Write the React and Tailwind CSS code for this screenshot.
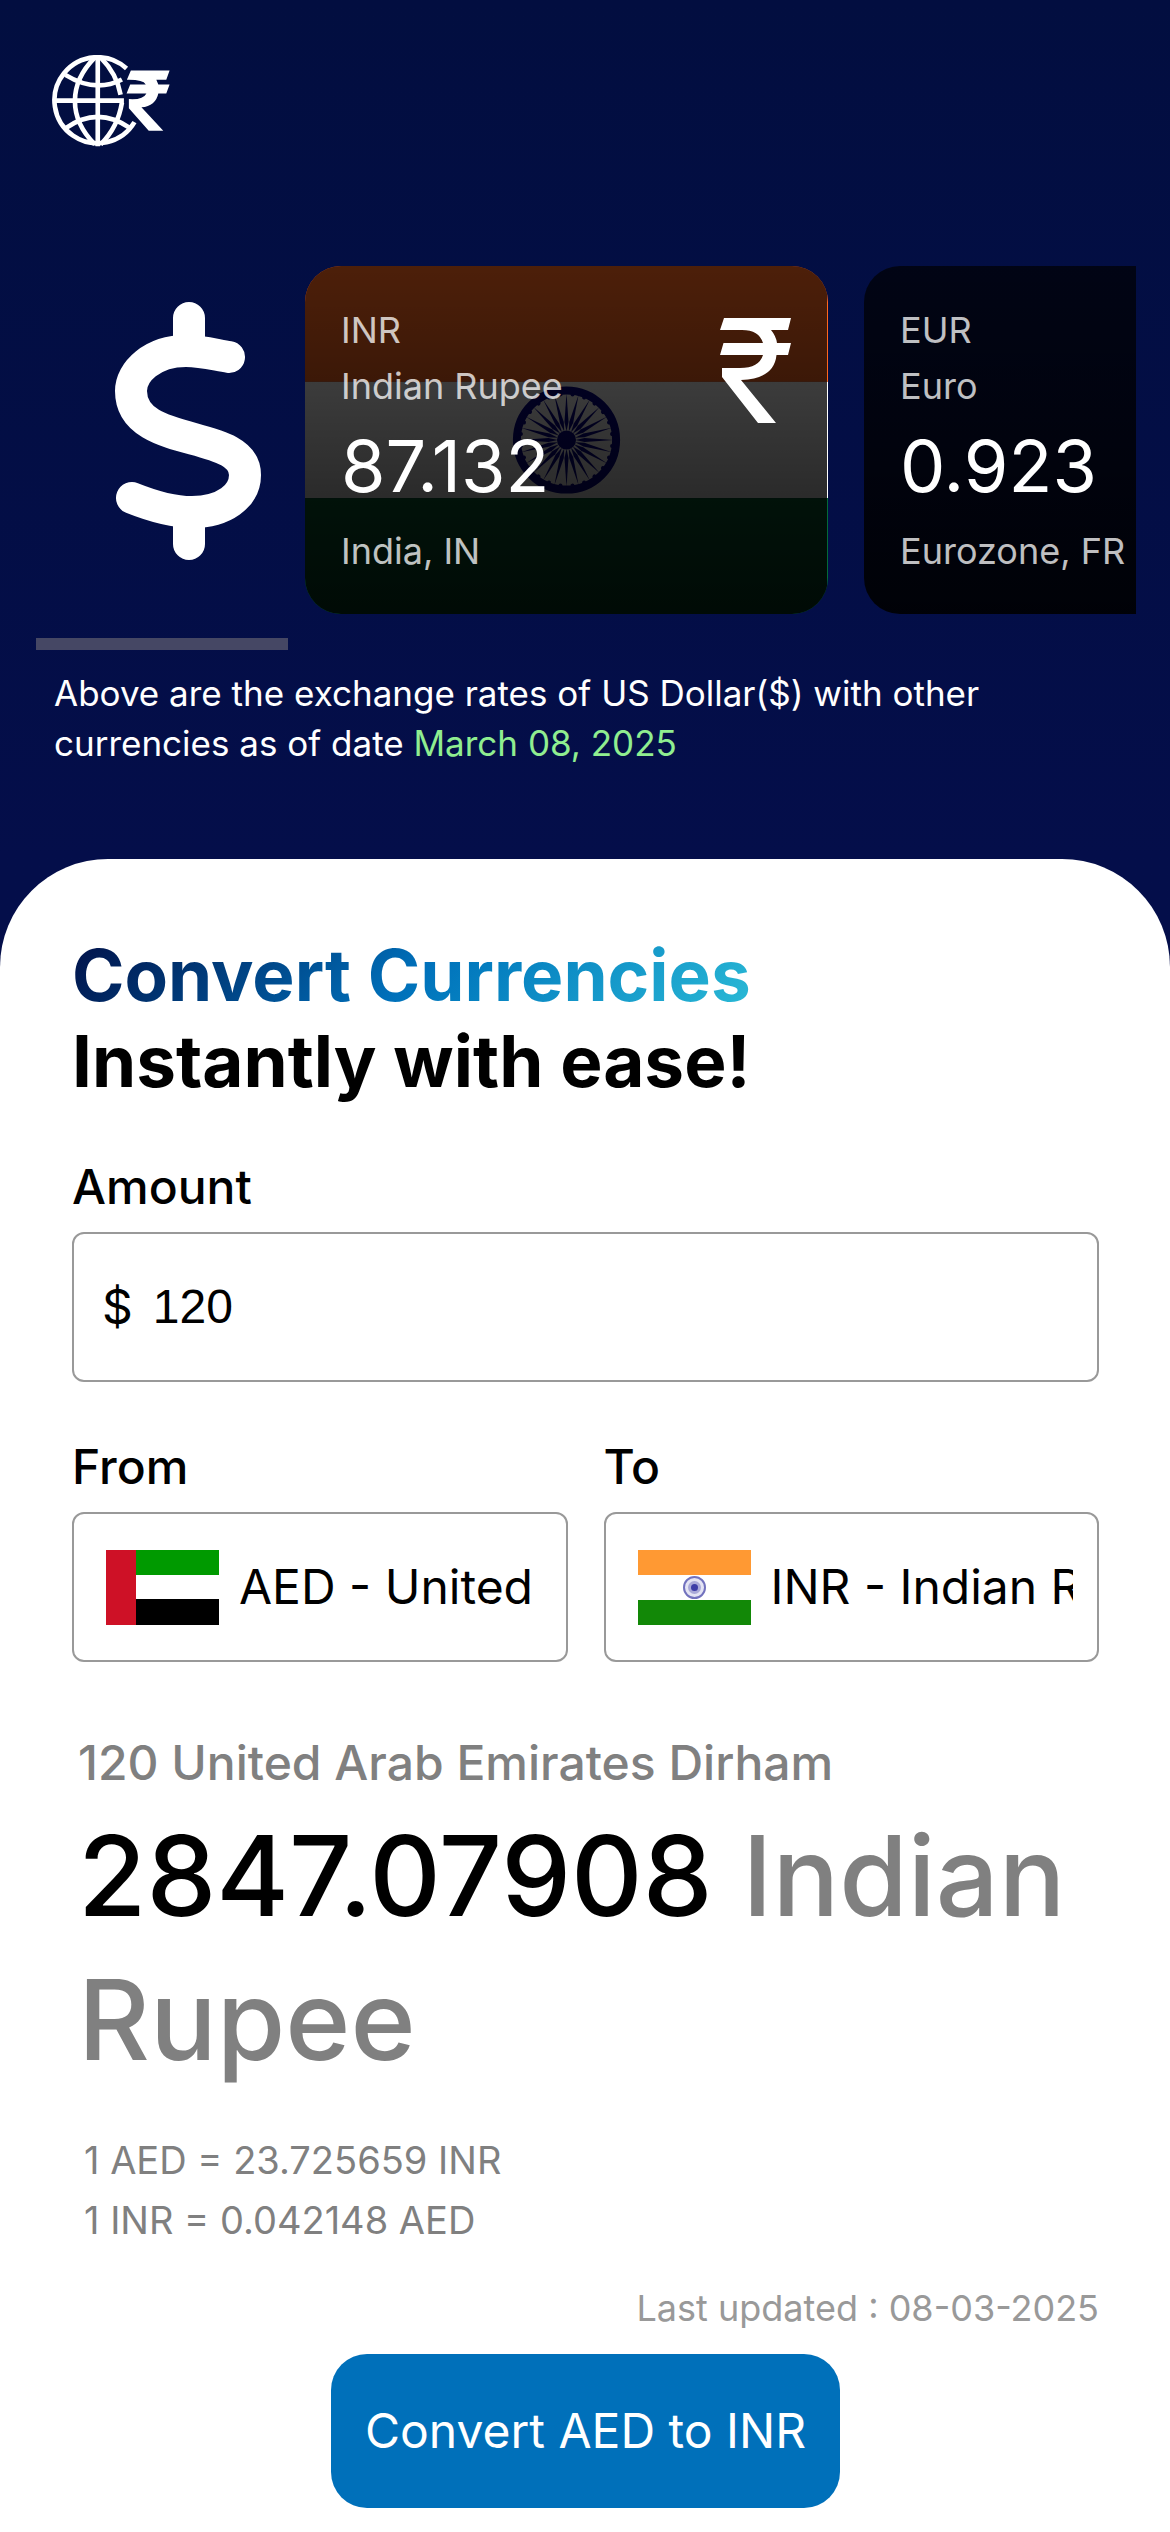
import React, { useState } from "react";

function Logo() {
  return (
    <svg viewBox="156 104 354 278" className="h-[92px] w-[118px]" role="img" aria-label="Currency converter">
      <g fill="none" stroke="#fff" strokeWidth="14">
        <path d="M380 145A130 130 0 1 0 404 307" />
        <path d="M293 106V380M160 242H372" />
        <path d="M284 112C204 192 204 294 284 374M302 112Q350 160 362 224M366 248Q354 322 302 374" />
        <path d="M195 164Q286 220 366 178" />
        <path d="M195 326Q293 256 392 326" />
      </g>
      <path
        fill="#fff"
        d="M393 151H510L500 179H470L476 193H510L500 220H476Q468 258 425 262L491 333H447L387 265V237Q430 240 440 220H380L391 193H438Q430 178 381 179Z"
      />
    </svg>
  );
}

function DollarSign() {
  return (
    <svg viewBox="115 302 147 258" className="h-[258px] w-[147px]" aria-hidden="true">
      <g fill="none" stroke="#fff" strokeWidth="32" strokeLinecap="round">
        <path d="M229 357C216 355 202 351 186 351C152 351 131 372 131 391C131 450 245 428 245 475C245 496 224 512 192 512C173 512 152 506 132 498" />
        <path d="M189 318V350M189 514V544" />
      </g>
    </svg>
  );
}

function RupeeSign() {
  return (
    <svg viewBox="0 0 71 105" className="h-[105px] w-[71px]" aria-hidden="true">
      <path
        fill="#fff"
        d="M4 0H71L68 12H51Q56 18 57 25H71L68 37H56.500Q54 61 21 62L56 105H38L2 59V50H20Q39 50 43 37H0L3.500 25H43Q39 12 22 12H0Z"
      />
    </svg>
  );
}

const SPOKES = Array.from({ length: 24 }, (_, i) => i * 15);

function IndiaBackdrop() {
  return (
    <svg
      viewBox="0 0 522 348"
      preserveAspectRatio="xMidYMid slice"
      className="absolute inset-0 h-full w-full"
      aria-hidden="true"
    >
      <rect width="522" height="116" fill="#ff671f" />
      <rect y="116" width="522" height="116" fill="#fff" />
      <rect y="232" width="522" height="116" fill="#046a38" />
      <g transform="translate(261 174)" fill="#06038d">
        <circle r="49.500" fill="none" stroke="#06038d" strokeWidth="8" />
        <circle r="9.500" />
        {SPOKES.map((angle) => (
          <g key={angle} transform={`rotate(${angle})`}>
            <path d="M0 -9L-2 -18L0 -47L2 -18Z" />
            <circle cx="6" cy="-45.500" r="2" />
          </g>
        ))}
      </g>
    </svg>
  );
}

function FlagUae() {
  return (
    <svg viewBox="0 0 113 75" className="h-[75px] w-[113px] shrink-0" aria-hidden="true">
      <rect width="113" height="75" fill="#fff" />
      <rect x="30" width="83" height="25" fill="#009a00" />
      <rect x="30" y="49" width="83" height="26" fill="#000" />
      <rect width="30" height="75" fill="#ce1126" />
    </svg>
  );
}

function FlagIndia() {
  return (
    <svg viewBox="0 0 113 75" className="h-[75px] w-[113px] shrink-0" aria-hidden="true">
      <rect width="113" height="75" fill="#fff" />
      <rect width="113" height="25" fill="#ff9933" />
      <rect y="50" width="113" height="25" fill="#128807" />
      <circle cx="56.500" cy="37.500" r="10.500" fill="#e4e4f4" stroke="#7272be" strokeWidth="2" />
      <circle cx="56.500" cy="37.500" r="6.500" fill="#a9a9d8" />
      <circle cx="56.500" cy="37.500" r="3.500" fill="#3c3ca6" />
    </svg>
  );
}

function RateCard({ code, name, rate, place, backdrop, sign }) {
  return (
    <li className="relative w-[523px] shrink-0 overflow-hidden rounded-[36px]">
      {backdrop}
      <div className="relative mr-px flex h-[348px] items-start justify-between bg-linear-to-b from-black/70 to-black/90 px-9 pt-9 whitespace-nowrap">
        <div>
          <p className="text-[36px] leading-[56px] text-white/75">{code}</p>
          <p className="text-[36px] leading-[56px] text-white/75">{name}</p>
          <p className="text-[72px] leading-[104px] text-white">{rate}</p>
          <p className="text-[36px] leading-[66px] text-white/75">{place}</p>
        </div>
        <div className="pt-4">{sign}</div>
      </div>
    </li>
  );
}

function CurrencyField({ id, label, flag, value, onChange }) {
  return (
    <div className="min-w-0">
      <label htmlFor={id} className="block text-[48px] leading-[58px] font-medium">
        {label}
      </label>
      <div className="mt-4 flex h-[150px] items-center gap-5 rounded-xl border-[2px] border-[#999] pr-6 pl-8">
        {flag}
        <input
          id={id}
          type="text"
          value={value}
          onChange={(e) => onChange(e.target.value)}
          className="w-0 min-w-0 flex-1 bg-transparent text-[48px] outline-none"
        />
      </div>
    </div>
  );
}

export default function App() {
  const [amount, setAmount] = useState("120");
  const [from, setFrom] = useState("AED - United Arab Emirates Dirham");
  const [to, setTo] = useState("INR - Indian Rupee");

  return (
    <div className="min-h-screen bg-linear-to-b from-[#020e40] to-[#040e4a] to-[859px] font-['Inter',sans-serif] text-black">
      <header className="px-[52px] pt-[55px]">
        <a href="#home" className="block w-fit">
          <Logo />
        </a>
      </header>

      <section className="pt-[119px] pr-[34px] pb-[91px] pl-9">
        <div className="flex items-start overflow-hidden">
          <div className="flex w-[269px] shrink-0 justify-end pt-9 pr-[43px]">
            <DollarSign />
          </div>
          <ul className="flex gap-9">
            <RateCard
              code="INR"
              name="Indian Rupee"
              rate="87.132"
              place="India, IN"
              backdrop={<IndiaBackdrop />}
              sign={<RupeeSign />}
            />
            <RateCard code="EUR" name="Euro" rate="0.923" place="Eurozone, FR" />
          </ul>
        </div>
        <div className="mt-6 h-3 w-[252px] bg-[#454764]" />
        <p className="mt-[18px] max-w-[1000px] px-[18px] text-[35px] leading-[50px] text-white">
          Above are the exchange rates of US Dollar($) with other currencies as of date{" "}
          <span className="text-[#90ee90]">March 08, 2025</span>
        </p>
      </section>

      <main className="rounded-t-[108px] bg-white pt-[73px] pr-[71px] pb-6 pl-[72px]">
        <h1 className="text-[71px] leading-[86px] font-bold">
          <span className="block w-fit bg-linear-135 from-[#020f46] via-[#0070ba] to-[#2bbbd6] bg-clip-text text-transparent">
            Convert Currencies
          </span>
          Instantly with ease!
        </h1>

        <form onSubmit={(e) => e.preventDefault()}>
          <label htmlFor="amount" className="mt-[54px] block text-[48px] leading-[58px] font-medium">
            Amount
          </label>
          <div className="mt-4 flex h-[150px] items-center gap-5 rounded-xl border-[2px] border-[#999] px-7 text-[48px]">
            <span aria-hidden="true">$</span>
            <input
              id="amount"
              type="text"
              inputMode="decimal"
              value={amount}
              onChange={(e) => setAmount(e.target.value)}
              className="w-0 flex-1 bg-transparent font-['Liberation_Sans',sans-serif] outline-none"
            />
          </div>

          <div className="mt-14 grid grid-cols-2 gap-9">
            <CurrencyField id="from" label="From" flag={<FlagUae />} value={from} onChange={setFrom} />
            <CurrencyField id="to" label="To" flag={<FlagIndia />} value={to} onChange={setTo} />
          </div>

          <output htmlFor="amount from to" className="mt-[72px] block px-1.5 font-medium text-[#808080]">
            <span className="block text-[48px] leading-[58px]">120 United Arab Emirates Dirham</span>
            <span className="mt-3 block text-[111px] leading-[144px]">
              <span className="text-black">2847.07908</span> Indian Rupee
            </span>
          </output>

          <div className="mt-[38px] px-3 text-[38px] leading-[60px] text-[#808080]">
            <p>1 AED = 23.725659 INR</p>
            <p>1 INR = 0.042148 AED</p>
          </div>

          <p className="mt-9 text-right text-[36px] leading-[44px] text-[#999]">Last updated : 08-03-2025</p>

          <button
            type="submit"
            className="mx-auto mt-6 block h-[154px] rounded-[36px] bg-[#0070ba] px-[34px] text-[48px] text-white"
          >
            Convert AED to INR
          </button>
        </form>
      </main>
    </div>
  );
}
